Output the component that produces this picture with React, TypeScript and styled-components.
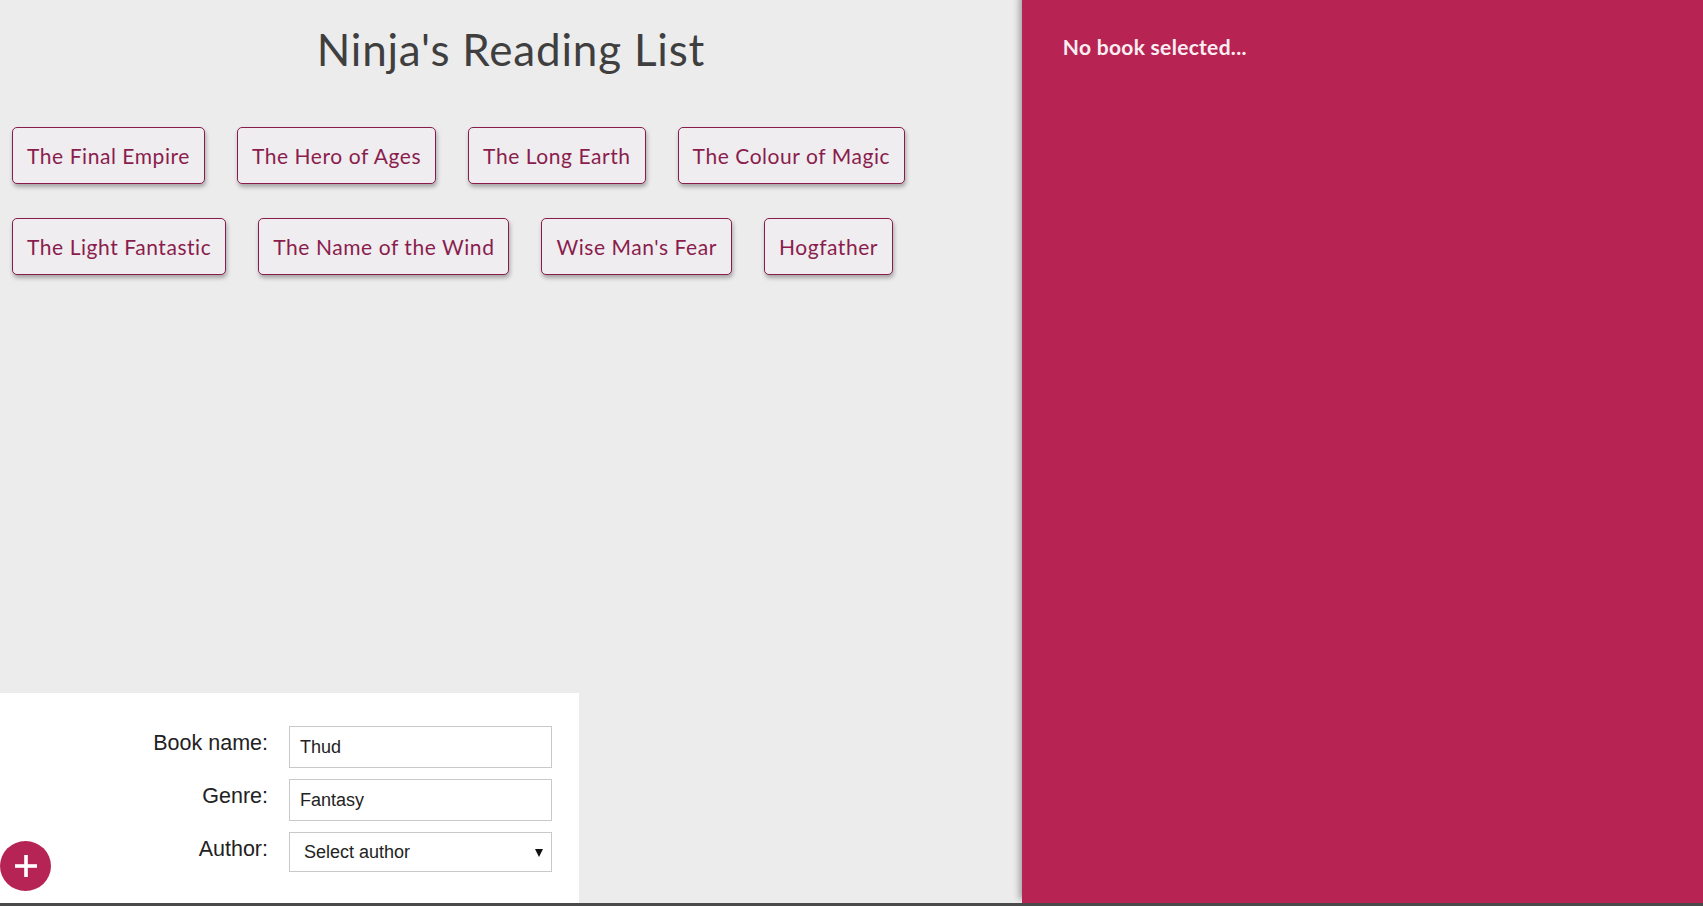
import styled, { createGlobalStyle } from "styled-components";

const books = [
  "The Final Empire",
  "The Hero of Ages",
  "The Long Earth",
  "The Colour of Magic",
  "The Light Fantastic",
  "The Name of the Wind",
  "Wise Man's Fear",
  "Hogfather",
];

const GlobalStyle = createGlobalStyle`
  html, body {
    margin: 0;
    padding: 0;
    background: #ececec;
    font-family: Lato, "Open Sans", sans-serif;
  }
  * {
    box-sizing: border-box;
  }
`;

const Page = styled.div`
  display: flex;
  height: 100vh;
  border-bottom: 3px solid #4a4a4a;
  overflow: hidden;
`;

const Main = styled.main`
  width: 60%;
  display: flex;
  flex-direction: column;
`;

const Title = styled.h1`
  margin: 23px 0 0;
  text-align: center;
  font-size: 44px;
  line-height: 53px;
  font-weight: 400;
  letter-spacing: 0.8px;
  color: #3f3f3f;
`;

const BookList = styled.ul`
  list-style: none;
  margin: 51px 0 0;
  padding: 0 12px;
  display: flex;
  flex-wrap: wrap;
  gap: 34px 32px;
`;

const BookItem = styled.li`
  padding: 15px 14px;
  font-size: 21px;
  line-height: 25px;
  letter-spacing: 0.56px;
  color: #8a1d4d;
  background: #efedef;
  border: 1px solid #8a1c4c;
  border-radius: 5px;
  box-shadow: 1px 3px 4px rgba(0, 0, 0, 0.3);
  cursor: pointer;
`;

const AddForm = styled.form`
  position: relative;
  margin-top: auto;
  width: 579px;
  background: #fff;
  padding: 28px 27px 31px 26px;
  font-family: "Liberation Sans", Arial, sans-serif;
`;

const Field = styled.div`
  display: grid;
  grid-template-columns: 1fr 263px;
  column-gap: 13px;
`;

const Label = styled.label`
  text-align: right;
  padding: 10px 8px 0 0;
  font-size: 21.5px;
  color: #222;
`;

const TextInput = styled.input`
  height: 42px;
  margin: 5px 0 6px;
  padding: 0 10px;
  border: 1px solid #c9c9c9;
  font-family: "Liberation Sans", Arial, sans-serif;
  font-size: 18px;
  color: #222;
  background: #fff;
  outline: none;
`;

const SelectWrap = styled.div`
  position: relative;
  margin: 5px 0 0;

  &::after {
    content: "";
    position: absolute;
    right: 9px;
    top: 17px;
    border-left: 4px solid transparent;
    border-right: 4px solid transparent;
    border-top: 8px solid #111;
    pointer-events: none;
  }
`;

const Select = styled.select`
  appearance: none;
  width: 100%;
  height: 40px;
  padding: 0 12px 0 14px;
  border: 1px solid #c9c9c9;
  border-radius: 0;
  font-family: "Liberation Sans", Arial, sans-serif;
  font-size: 18px;
  color: #222;
  background: #fff;
  outline: none;
`;

const AddButton = styled.button`
  position: absolute;
  left: 0;
  bottom: 12px;
  width: 51px;
  height: 50px;
  border: 0;
  border-radius: 50%;
  background: #b62456;
  display: flex;
  align-items: center;
  justify-content: center;
  padding: 0;
  cursor: pointer;
`;

const Details = styled.aside`
  width: 40%;
  background: #b72453;
  padding: 34px 41px;
  box-shadow: -3px -4px 6px rgba(0, 0, 0, 0.3);
  color: #fff;
`;

const Empty = styled.p`
  margin: 0;
  font-size: 21px;
  line-height: 25px;
  font-weight: 700;
  letter-spacing: 0.3px;
  color: #fbeef3;
`;

export default function App() {
  return (
    <>
      <GlobalStyle />
      <Page>
        <Main>
          <Title>Ninja's Reading List</Title>
          <BookList>
            {books.map((b) => (
              <BookItem key={b}>{b}</BookItem>
            ))}
          </BookList>
          <AddForm onSubmit={(e) => e.preventDefault()}>
            <Field>
              <Label>Book name:</Label>
              <TextInput type="text" defaultValue="Thud" />
            </Field>
            <Field>
              <Label>Genre:</Label>
              <TextInput type="text" defaultValue="Fantasy" />
            </Field>
            <Field>
              <Label>Author:</Label>
              <SelectWrap>
                <Select defaultValue="">
                  <option value="">Select author</option>
                </Select>
              </SelectWrap>
            </Field>
            <AddButton type="submit" aria-label="Add book">
              <svg width="22" height="22" viewBox="0 0 22 22">
                <rect x="9.2" y="0" width="3.6" height="22" fill="#fff" />
                <rect x="0" y="9.2" width="22" height="3.6" fill="#fff" />
              </svg>
            </AddButton>
          </AddForm>
        </Main>
        <Details>
          <Empty>No book selected...</Empty>
        </Details>
      </Page>
    </>
  );
}
